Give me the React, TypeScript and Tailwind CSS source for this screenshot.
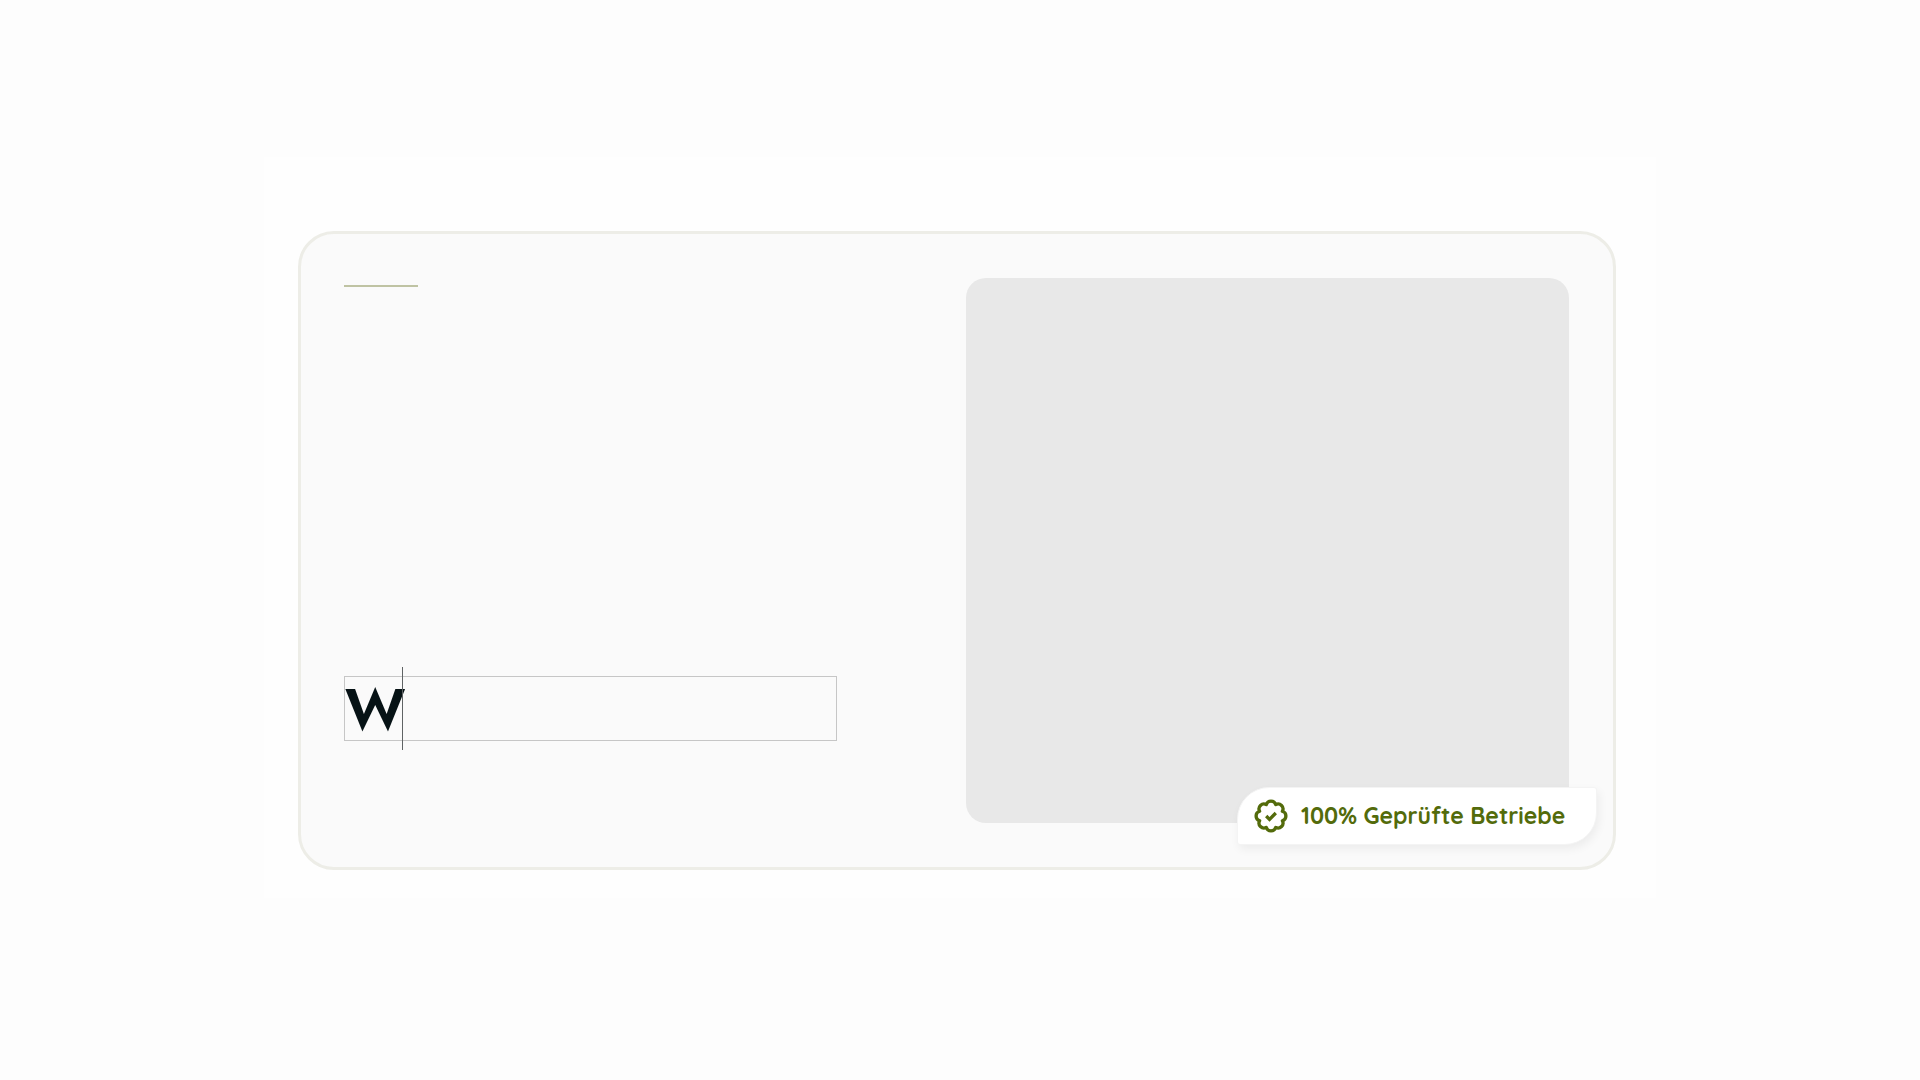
import { useState } from "react";

const VerifiedIcon = () => (
  <svg
    className="size-9 shrink-0"
    viewBox="0 0 24 24"
    fill="none"
    stroke="currentColor"
    strokeWidth="2.2"
    strokeLinecap="round"
    strokeLinejoin="round"
    aria-hidden="true"
  >
    <path d="M8.86 4.42a3.27 3.27 0 0 1 6.28 0a3.27 3.27 0 0 1 4.44 4.44a3.27 3.27 0 0 1 0 6.28a3.27 3.27 0 0 1-4.44 4.44a3.27 3.27 0 0 1-6.28 0a3.27 3.27 0 0 1-4.44-4.44a3.27 3.27 0 0 1 0-6.28a3.27 3.27 0 0 1 4.44-4.44Z" />
    <path d="m8.8 12 2.2 2.2 4.2-4.2" strokeLinecap="butt" strokeLinejoin="miter" />
  </svg>
);

const Badge = () => (
  <div className="absolute -bottom-[22px] -right-7 flex h-[58px] w-[360px] items-center gap-3 rounded-tl-[32px] rounded-tr-[3px] rounded-br-[32px] rounded-bl-[3px] border border-[#f4f4f4] bg-white pl-[15px] text-[#536b0b] shadow-[2px_4px_10px_rgba(0,0,0,0.06)]">
    <VerifiedIcon />
    <span className="whitespace-nowrap font-['Quicksand','Lato',sans-serif] text-[23px] leading-8 font-bold">
      100% Geprüfte Betriebe
    </span>
  </div>
);

const App = () => {
  const [headline, setHeadline] = useState("W");

  return (
    <main className="min-h-screen bg-[#fdfdfd] pt-[157px]">
      <section className="mx-auto w-[72.5%] bg-[#fefefe] pt-[74px] pr-10 pb-7 pl-[34px]">
        <div className="grid grid-cols-[492fr_603fr] gap-[129px] rounded-[36px] border-3 border-[#ededE7] bg-[#fafafa] p-11">
          <div className="flex flex-col justify-between pt-[7px] pb-[82px]">
            <hr className="-ml-px w-[74px] border-t-2 border-[#bfc3a3]" />
            <div className="relative -ml-px">
              <input
                aria-label="Headline"
                className="block h-[65px] w-full border border-[#c6c6c6] bg-transparent font-['Jost','Lato',sans-serif] text-[58px] leading-[62px] font-semibold text-[#061215] outline-none"
                value={headline}
                onChange={(e) => setHeadline(e.target.value)}
              />
              <span className="absolute -top-[9px] left-[58px] h-[83px] w-px bg-[#5f6364]" />
            </div>
          </div>
          <div className="relative h-[545px] rounded-[20px] bg-[#e8e8e8]">
            <Badge />
          </div>
        </div>
      </section>
    </main>
  );
};

export default App;
